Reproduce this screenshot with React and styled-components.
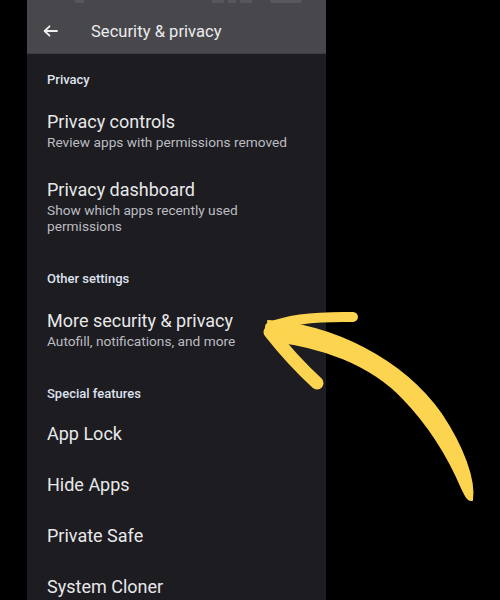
import React from "react";
import styled, { createGlobalStyle } from "styled-components";

const Global = createGlobalStyle`
  html, body { margin: 0; padding: 0; background: #000; }
  body { font-family: Roboto, "Noto Sans", "DejaVu Sans", sans-serif; }
  #root { width: 500px; height: 600px; overflow: hidden; }
`;

const Page = styled.div`
  position: relative;
  width: 500px;
  height: 600px;
  background: #000;
  display: flex;
  overflow: hidden;
`;

const Screen = styled.div`
  margin-left: 27px;
  width: 299px;
  height: 600px;
  background: #1c1c21;
  display: flex;
  flex-direction: column;
  overflow: hidden;
`;

const Toolbar = styled.div`
  flex-shrink: 0;
  height: 53px;
  background: #48484c;
  border-bottom: 1px solid #3e3e42;
  display: flex;
  flex-direction: column;
`;

const StatusRow = styled.div`
  height: 4px;
  display: flex;
  align-items: flex-start;
`;

const StatusBit = styled.span`
  display: block;
  margin-left: ${(p) => p.$ml}px;
  width: ${(p) => p.$w}px;
  height: 3px;
  border-radius: 0 0 2px 2px;
  background: #58585c;
`;

const TitleRow = styled.div`
  flex: 1;
  display: flex;
  align-items: center;
  padding: 5px 0 0 16px;
  gap: 33px;
`;

const Title = styled.div`
  font-size: 16.5px;
  color: #ececee;
  letter-spacing: 0.05px;
`;

const List = styled.div`
  flex-shrink: 0;
  display: flex;
  flex-direction: column;
`;

const Header = styled.div`
  padding: ${(p) => (p.$first ? 18 : 25)}px 20px 6px;
  font-size: 13px;
  line-height: 16px;
  font-weight: 500;
  color: #dfe1ee;
`;

const Item = styled.div`
  padding: ${(p) => (p.$sub ? "16px 20px 12px" : "14px 20px 13px")};
  display: flex;
  flex-direction: column;
`;

const ItemTitle = styled.div`
  font-size: 18px;
  line-height: 24px;
  color: #e8e8ea;
`;

const ItemSub = styled.div`
  font-size: 13.7px;
  line-height: 16px;
  color: #bcbcc1;
`;

const Overlay = styled.svg`
  position: absolute;
  left: 0;
  top: 0;
  pointer-events: none;
`;

const BackIcon = () => (
  <svg width="15" height="12" viewBox="0 0 15 12">
    <path
      d="M14 6H2M6.5 1.3L1.6 6l4.9 4.7"
      stroke="#f0f0f0"
      strokeWidth="1.8"
      fill="none"
      strokeLinecap="round"
      strokeLinejoin="round"
    />
  </svg>
);

const sections = [
  {
    header: "Privacy",
    items: [
      { t: "Privacy controls", s: "Review apps with permissions removed" },
      { t: "Privacy dashboard", s: "Show which apps recently used permissions" },
    ],
  },
  {
    header: "Other settings",
    items: [{ t: "More security & privacy", s: "Autofill, notifications, and more" }],
  },
  {
    header: "Special features",
    items: [{ t: "App Lock" }, { t: "Hide Apps" }, { t: "Private Safe" }, { t: "System Cloner" }],
  },
];

export default function App() {
  return (
    <>
      <Global />
      <Page>
        <Screen>
          <Toolbar>
            <StatusRow>
              <StatusBit $ml={48} $w={9} />
              <StatusBit $ml={128} $w={12} />
              <StatusBit $ml={4} $w={8} />
              <StatusBit $ml={4} $w={12} />
              <StatusBit $ml={18} $w={32} />
            </StatusRow>
            <TitleRow>
              <BackIcon />
              <Title>Security &amp; privacy</Title>
            </TitleRow>
          </Toolbar>
          <List>
            {sections.map((sec, i) => (
              <React.Fragment key={sec.header}>
                <Header $first={i === 0}>{sec.header}</Header>
                {sec.items.map((it) => (
                  <Item key={it.t} $sub={!!it.s}>
                    <ItemTitle>{it.t}</ItemTitle>
                    {it.s && <ItemSub>{it.s}</ItemSub>}
                  </Item>
                ))}
              </React.Fragment>
            ))}
          </List>
        </Screen>
        <Overlay width="500" height="600" viewBox="0 0 500 600">
          <g fill="#fdd44f" stroke="#fdd44f" strokeLinecap="round" strokeLinejoin="round">
            <path
              d="M 268 321 C 332 325, 402 359, 441 414 C 463 447, 475 480, 472 500 C 468 501, 466 496, 462 488 C 450 460, 430 426, 404 399 C 370 363, 320 346, 272 341 Z"
              strokeWidth="2"
            />
            <path d="M 270 327 Q 296 316 353 317" fill="none" strokeWidth="10" />
            <path d="M 270 332 Q 292 360 317 383" fill="none" strokeWidth="13" />
          </g>
        </Overlay>
      </Page>
    </>
  );
}
